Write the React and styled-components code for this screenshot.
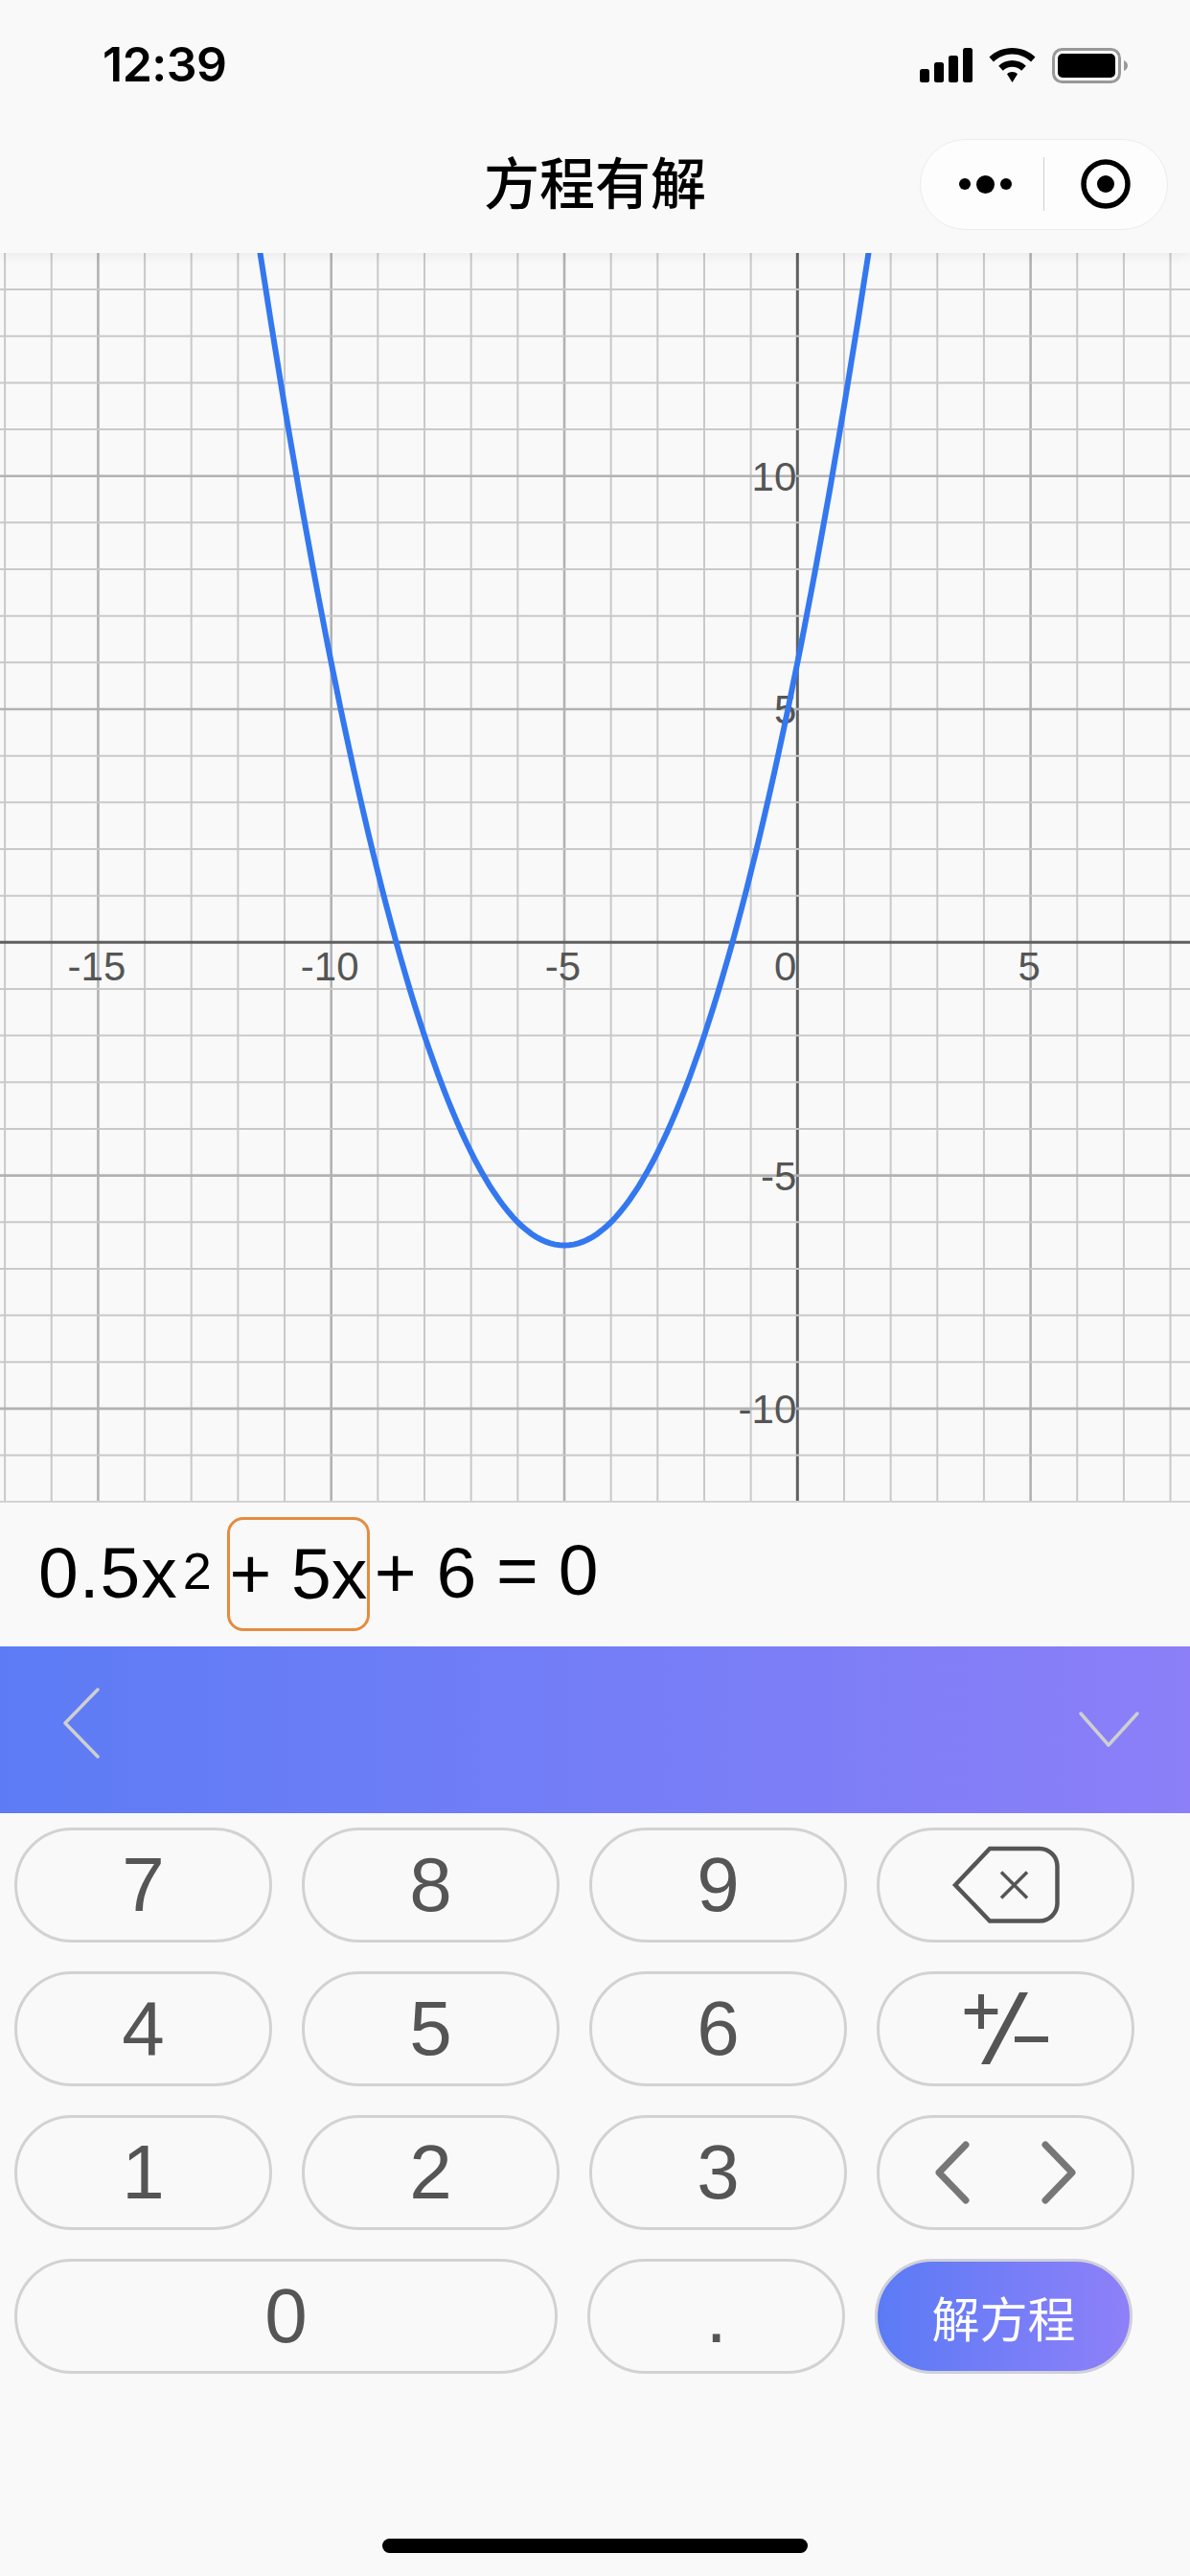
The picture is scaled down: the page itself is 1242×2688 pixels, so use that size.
import React from "react";
import styled, { createGlobalStyle } from "styled-components";

const GlobalStyle = createGlobalStyle`
  html, body {
    margin: 0;
    padding: 0;
    background: #f9f9f9;
  }
  * {
    box-sizing: border-box;
  }
`;

// graph geometry, measured from the canvas
const GRAPH_W = 1242;
const GRAPH_H = 1302;
const ORIGIN_X = 832.3;
const ORIGIN_Y = 719.3;
const UNIT = 48.66;

const toX = (v) => ORIGIN_X + v * UNIT;
const toY = (v) => ORIGIN_Y - v * UNIT;

const xTicks = [];
for (let i = -17; i <= 8; i++) xTicks.push(i);
const yTicks = [];
for (let i = -12; i <= 15; i++) yTicks.push(i);

const curve = () => {
  const pts = [];
  for (let x = -13; x <= 3; x += 0.1) {
    const y = 0.5 * x * x + 5 * x + 6;
    pts.push(`${toX(x).toFixed(1)},${toY(y).toFixed(1)}`);
  }
  return "M" + pts.join(" L");
};

const lineColor = (v) => {
  if (v === 0) return "#5f5f5f";
  return v % 5 === 0 ? "#b2b2b2" : "#c9c9c9";
};
const lineWidth = (v) => {
  if (v === 0) return 3;
  return v % 5 === 0 ? 2.6 : 2;
};

const Page = styled.div`
  width: 1242px;
  height: 2688px;
  display: flex;
  flex-direction: column;
  background: #f9f9f9;
  font-family: "Liberation Sans", Arial, sans-serif;
  overflow: hidden;
`;

const Header = styled.header`
  position: relative;
  z-index: 2;
  background: #f9f9f9;
  box-shadow: 0 2px 12px rgba(0, 0, 0, 0.07);
`;

const StatusBar = styled.div`
  height: 136px;
  display: flex;
  align-items: center;
  justify-content: space-between;
  padding: 0 65px 0 107px;
`;

const Time = styled.span`
  font-family: Inter, "Liberation Sans", sans-serif;
  font-size: 50px;
  font-weight: 600;
  letter-spacing: -0.5px;
  line-height: 1;
  margin-bottom: 2px;
  color: #000;
`;

const StatusIcons = styled.div`
  display: flex;
  align-items: center;
  gap: 17px;

  svg {
    display: block;
  }
`;

const NavBar = styled.div`
  height: 128px;
  padding: 0 23px 16px;
  display: grid;
  grid-template-columns: 1fr auto 1fr;
  align-items: center;
`;

const Title = styled.h1`
  grid-column: 2;
  margin: 0 0 8px;
  font-family: "Noto Sans CJK SC", sans-serif;
  font-size: 58px;
  font-weight: 500;
  line-height: 1;
  color: #000;
`;

const Capsule = styled.div`
  grid-column: 3;
  justify-self: end;
  width: 259px;
  height: 95px;
  display: flex;
  align-items: center;
  border: 1.5px solid #ececec;
  border-radius: 48px;
  background: #fdfdfd;
`;

const CapsulePart = styled.div`
  flex: 1;
  height: 56px;
  display: flex;
  align-items: center;
  justify-content: center;
  border-left: ${(p) => (p.$divided ? "1.5px solid #cfcfcf" : "none")};
`;

const Dot = styled.span`
  display: block;
  width: ${(p) => p.$size}px;
  height: ${(p) => p.$size}px;
  border-radius: 50%;
  background: #000;
`;

const Dots = styled.div`
  display: flex;
  align-items: center;
  gap: 6px;
  margin-left: 7px;
`;

const GraphPanel = styled.section`
  height: 1304px;
  border-bottom: 2px solid #d2d2d2;
  flex-shrink: 0;

  svg {
    display: block;
  }
`;

const AxisLabel = styled.text`
  font-family: "Liberation Sans", Arial, sans-serif;
  font-size: 42px;
  fill: #555;
`;

const EquationRow = styled.div`
  height: 150px;
  flex-shrink: 0;
  display: flex;
  align-items: center;
  padding: 0 0 4px 40px;
  font-size: 75px;
  line-height: 1;
  color: #000;
  white-space: pre;
`;

const LeadTerm = styled.span`
  letter-spacing: 1px;
`;

const Sup = styled.span`
  font-size: 54px;
  margin: 0 16px 0 5px;
  padding-bottom: 4px;
`;

const ActiveTerm = styled.span`
  width: 149px;
  height: 119px;
  margin-top: 2px;
  display: flex;
  align-items: center;
  justify-content: center;
  border: 3px solid #e58b3f;
  border-radius: 17px;
`;

const Term = styled.span`
  margin-left: 5px;
`;

const RightSide = styled.span`
  padding-bottom: 6px;
`;

const ToolBar = styled.div`
  height: 174px;
  flex-shrink: 0;
  display: flex;
  align-items: center;
  justify-content: space-between;
  padding: 0 52px 0 63px;
  background: linear-gradient(to right, #5c7cf5, #8c7ff8);
`;

const BackIcon = styled.svg`
  margin-bottom: 15px;
  display: block;
`;

const Keypad = styled.div`
  padding: 15px 0 0 15px;
  display: flex;
  flex-direction: column;
  gap: 30px;
`;

const KeyRow = styled.div`
  display: flex;
  gap: 31px;
`;

const Key = styled.button`
  width: ${(p) => (p.$wide ? 567 : 269)}px;
  height: 120px;
  padding: 0;
  display: flex;
  align-items: center;
  justify-content: center;
  border: 3px solid #d2d2d2;
  border-radius: 60px;
  background: #f9f9f9;
  font-family: "Liberation Sans", Arial, sans-serif;
  font-size: 80px;
  color: #555;
`;

const SolveKey = styled(Key)`
  border-color: #d0d0da;
  background: linear-gradient(to right, #5a7bf5, #8f80f9);
  background-origin: border-box;
  font-family: "Noto Sans CJK SC", sans-serif;
  font-size: 50px;
  color: #fff;
`;

const HomeBar = styled.div`
  margin: auto auto 24px;
  width: 444px;
  height: 15px;
  border-radius: 8px;
  background: #000;
`;

const SignalIcon = () => (
  <svg width="55" height="36" viewBox="0 0 55 36">
    <rect x="0" y="22" width="10" height="14" rx="2.5" fill="#000" />
    <rect x="15" y="15" width="10" height="21" rx="2.5" fill="#000" />
    <rect x="30" y="8" width="10" height="28" rx="2.5" fill="#000" />
    <rect x="45" y="0" width="10" height="36" rx="2.5" fill="#000" />
  </svg>
);

const WifiIcon = () => (
  <svg width="49" height="36" viewBox="0 0 49 36">
    <path d="M24.5 0C15 0 6.5 3.7.5 9.5L5 14.5C10 9.7 17 6.6 24.5 6.6S39 9.7 44 14.5L48.5 9.5C42.5 3.7 34 0 24.5 0Z" fill="#000" />
    <path d="M24.5 13C19 13 14 15.2 10.2 18.8L14.8 23.8C17.4 21.3 20.8 19.8 24.5 19.8S31.6 21.3 34.2 23.8L38.8 18.8C35 15.2 30 13 24.5 13Z" fill="#000" />
    <path d="M24.5 25C22.4 25 20.4 25.9 19 27.3L24.5 36L30 27.3C28.6 25.9 26.6 25 24.5 25Z" fill="#000" />
  </svg>
);

const BatteryIcon = () => (
  <svg width="79" height="37" viewBox="0 0 79 37">
    <rect x="1.5" y="1.5" width="69" height="34" rx="9" fill="none" stroke="#999" strokeWidth="3" />
    <rect x="6" y="6" width="60" height="25" rx="5" fill="#000" />
    <path d="M75 13C77.5 14 79 16 79 18.5S77.5 23 75 24Z" fill="#999" />
  </svg>
);

const TargetIcon = () => (
  <svg width="52" height="52" viewBox="0 0 52 52">
    <circle cx="26" cy="26" r="23" fill="none" stroke="#000" strokeWidth="5.5" />
    <circle cx="26" cy="26" r="9" fill="#000" />
  </svg>
);

const BackspaceIcon = () => (
  <svg width="116" height="82" viewBox="0 0 116 82">
    <path d="M5 41L41 3H93A18.5 18.5 0 0 1 111.5 21.5V60A18.5 18.5 0 0 1 93 78.5H41Z" fill="none" stroke="#555" strokeWidth="4.5" />
    <path d="M53 27.5L80 54.5M80 27.5L53 54.5" stroke="#555" strokeWidth="3.5" />
  </svg>
);

const PlusMinusIcon = () => (
  <svg width="92" height="80" viewBox="0 0 92 80">
    <path d="M2.7 22H37.3M20 4V40M55 51H90" stroke="#555" strokeWidth="6" fill="none" />
    <polygon points="60,2 69,2 29,77 20,77" fill="#555" />
  </svg>
);

const CursorIcon = () => (
  <svg width="160" height="70" viewBox="0 0 160 70">
    <path d="M38 6L10 35L38 64M121 6L149 35L121 64" fill="none" stroke="#777" strokeWidth="7" strokeLinecap="round" strokeLinejoin="round" />
  </svg>
);

const Graph = () => (
  <svg width={GRAPH_W} height={GRAPH_H} viewBox={`0 0 ${GRAPH_W} ${GRAPH_H}`}>
    {xTicks.map((v) => (
      <line key={v} x1={toX(v)} x2={toX(v)} y1="0" y2={GRAPH_H} stroke={lineColor(v)} strokeWidth={lineWidth(v)} />
    ))}
    {yTicks.map((v) => (
      <line key={v} x1="0" x2={GRAPH_W} y1={toY(v)} y2={toY(v)} stroke={lineColor(v)} strokeWidth={lineWidth(v)} />
    ))}
    {[-15, -10, -5, 5].map((v) => (
      <AxisLabel key={v} x={toX(v) - 1.5} y={ORIGIN_Y + 40} textAnchor="middle">
        {v}
      </AxisLabel>
    ))}
    <AxisLabel x={ORIGIN_X - 1} y={ORIGIN_Y + 40} textAnchor="end">
      0
    </AxisLabel>
    {[10, 5, -5, -10].map((v) => (
      <AxisLabel key={v} x={ORIGIN_X - 1} y={toY(v) + 15} textAnchor="end">
        {v}
      </AxisLabel>
    ))}
    <path d={curve()} fill="none" stroke="#3478f0" strokeWidth="6" />
  </svg>
);

const digitRows = [
  ["7", "8", "9"],
  ["4", "5", "6"],
  ["1", "2", "3"],
];
const rowIcons = [<BackspaceIcon />, <PlusMinusIcon />, <CursorIcon />];

export default function App() {
  return (
    <Page>
      <GlobalStyle />
      <Header>
        <StatusBar>
          <Time>12:39</Time>
          <StatusIcons>
            <SignalIcon />
            <WifiIcon />
            <BatteryIcon />
          </StatusIcons>
        </StatusBar>
        <NavBar>
          <Title>方程有解</Title>
          <Capsule>
            <CapsulePart>
              <Dots>
                <Dot $size={12} />
                <Dot $size={19} />
                <Dot $size={12} />
              </Dots>
            </CapsulePart>
            <CapsulePart $divided>
              <TargetIcon />
            </CapsulePart>
          </Capsule>
        </NavBar>
      </Header>

      <GraphPanel>
        <Graph />
      </GraphPanel>

      <EquationRow>
        <LeadTerm>0.5x</LeadTerm>
        <Sup>2</Sup>
        <ActiveTerm>+ 5x</ActiveTerm>
        <Term>+ 6 </Term>
        <RightSide>= 0</RightSide>
      </EquationRow>

      <ToolBar>
        <BackIcon width="44" height="76" viewBox="0 0 44 76">
          <path d="M39 3L5 38L39 73" fill="none" stroke="#cfcfcf" strokeWidth="3.5" strokeLinecap="round" strokeLinejoin="round" />
        </BackIcon>
        <svg width="66" height="40" viewBox="0 0 66 40">
          <path d="M4 3L33 36L63 3" fill="none" stroke="#cfcfcf" strokeWidth="3.5" strokeLinecap="round" strokeLinejoin="round" />
        </svg>
      </ToolBar>

      <Keypad>
        {digitRows.map((row, i) => (
          <KeyRow key={i}>
            {row.map((d) => (
              <Key key={d}>{d}</Key>
            ))}
            <Key>{rowIcons[i]}</Key>
          </KeyRow>
        ))}
        <KeyRow>
          <Key $wide>0</Key>
          <Key>.</Key>
          <SolveKey>解方程</SolveKey>
        </KeyRow>
      </Keypad>

      <HomeBar />
    </Page>
  );
}
